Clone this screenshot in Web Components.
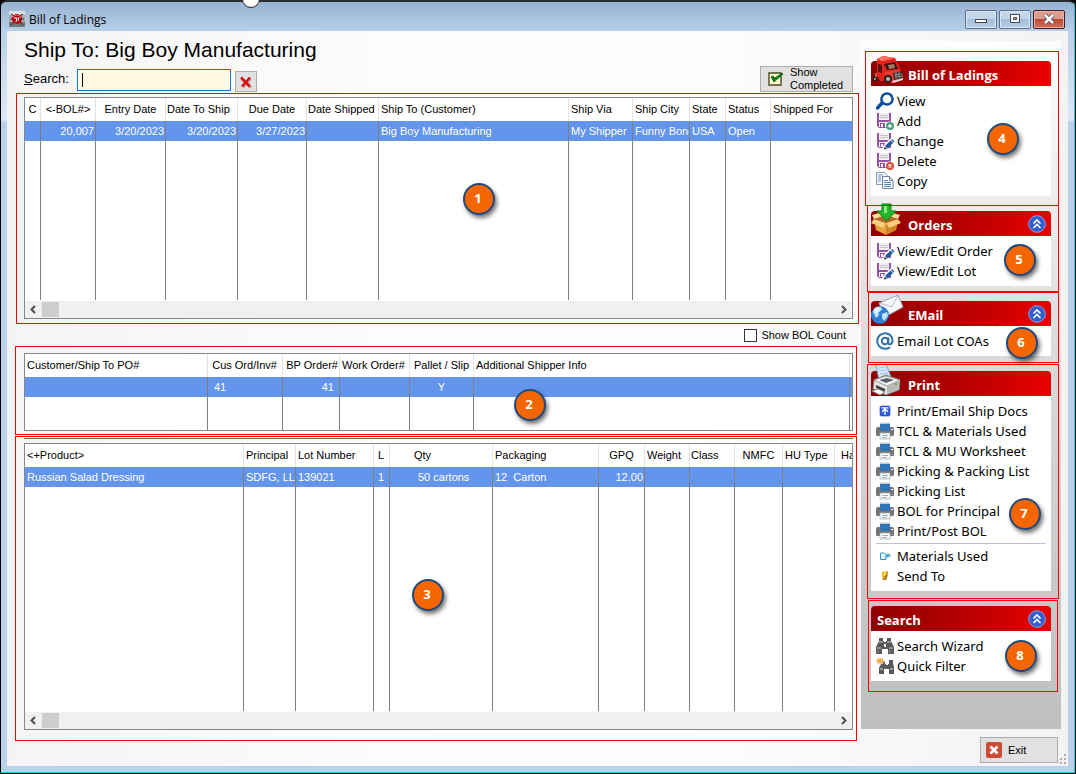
<!DOCTYPE html>
<html lang="en">
<head>
<meta charset="utf-8">
<title>Bill of Ladings</title>
<style>
  body { margin: 0; background: #000; font-family: "Liberation Sans", Arial, sans-serif; font-size: 11px; color: #000; }
</style>
</head>
<body>
<bol-app></bol-app>
<script>
const disk = `<path d="M1 1h14v15H3l-2-2z" fill="#9553a8"/><path d="M3 1h10v7H3z" fill="#f1f1f1"/><path d="M4 3h8v1H4zM4 5h8v1H4z" fill="#c4c4c4"/><path d="M3 10h10v5H3z" fill="#fff"/><path d="M4 11h5v4H4z" fill="#9553a8"/><path d="M5 12h2v3H5z" fill="#fff"/>`;
const printer = `<path d="M4 0h10v4H4z" fill="#e4e8ec"/><path d="M0 7l1-2h16l1 2v6l-1 1H1l-1-1z" fill="#757577"/><path d="M4 2h10v6l-1 1H5L4 8z" fill="#2f74b5"/><path d="M4 1h10v1H4z" fill="#c2cbd4"/><path d="M15 7h2v1h-2z" fill="#fff"/><path d="M4 11h10v6H4z" fill="#fff" stroke="#a5acb4" stroke-width=".8"/><path d="M6 13h6v1H6zM6 15h5v1H6z" fill="#8fb4d8"/>`;
const bino = `<path d="M3 1h4v3h1v1h2V4h1V1h4v3l3 6v7h-6v-5H6v5H0v-7l3-6z" fill="#59595b"/><path d="M1 11h4M13 11h4M3 5h4M11 5h4" stroke="#d8d8d8" stroke-width=".9"/><path d="M8 7h2v3H8z" fill="#fff"/><path d="M2 13v3M14 13v3" stroke="#999" stroke-width="1"/>`;
const chevrons = `<circle cx="9" cy="9" r="8.300" fill="#2f5fd0" stroke="#8aa6ea"/><path d="M5.500 8.500L9 5l3.500 3.500M5.500 13L9 9.500l3.500 3.500" fill="none" stroke="#fff" stroke-width="1.700"/>`;
const ICONS = {
  app: [16, `<rect width="16" height="16" fill="#aaa"/><path d="M0 0h16v4H0z" fill="#ddd"/><path d="M0 11h16v5H0z" fill="#777"/><path d="M2 3l3 2M14 3l-3 2M1 8h3M15 8h-3M2 14l3-3M14 14l-3-3" stroke="#444" stroke-width="1.200"/><circle cx="8" cy="8" r="5" fill="#b30812"/><path d="M4 6q4-4 8 0" stroke="#f0676c" fill="none"/><path d="M5 7h3l-1 4M10 6l-1 4" stroke="#fff" stroke-width="1" fill="none"/>`],
  view: [18, `<path d="M1.500 16l5-5.500" stroke="#0c4da2" stroke-width="3.400" stroke-linecap="round"/><circle cx="11" cy="7" r="5.600" fill="#fff" stroke="#0c4da2" stroke-width="2.500"/>`],
  add: [18, disk + `<circle cx="14" cy="14" r="4.500" fill="#fff"/><circle cx="14" cy="14" r="4" fill="#43a47c"/><path d="M14 12v4M12 14h4" stroke="#fff" stroke-width="1.300"/>`],
  change: [18, disk + `<path d="M6.500 17.500l1-4 7-7 3.500 3-7 7z" fill="#fff"/><path d="M9 14l5.500-5.500 2.500 2.500-5.500 5.500z" fill="#215c99"/><path d="M15 8l1-1 2.500 2.500-1 1z" fill="#215c99"/><path d="M8 17.500l.6-3 2.400 2.400z" fill="#333"/>`],
  del: [18, disk + `<circle cx="14" cy="14" r="4.500" fill="#fff"/><circle cx="14" cy="14" r="4" fill="#d2503a"/><path d="M12.500 12.500l3 3M15.500 12.500l-3 3" stroke="#fff" stroke-width="1.200"/>`],
  copy: [18, `<path d="M.500 .500h8l3 3v9h-11z" fill="#f2f5f8" stroke="#8c9aaa"/><path d="M2 3h5M2 5h3M2 7h3M2 9h3" stroke="#6b9bc9"/><path d="M6.500 4.500h7l3.500 3.500v8.500H6.500z" fill="#fff" stroke="#6e8196"/><path d="M13.500 4.500v4H17" fill="#ccd8e4" stroke="#6e8196"/><path d="M8 8.500h4M8 10.500h7M8 12.500h7M8 14.500h7" stroke="#4785bd"/>`],
  at: [18, `<circle cx="9" cy="9" r="3.200" fill="none" stroke="#2f73ad" stroke-width="2"/><path d="M12.300 5.500v5.500c0 2.300 4.200 1.800 4.200-2.500C16.500 4.200 13.200 1.200 9 1.200S1.200 4.800 1.200 9s3.300 7.800 7.800 7.800c2 0 3.600-.5 5-1.400" fill="none" stroke="#2f73ad" stroke-width="2"/>`],
  printer: [18, printer],
  up: [18, `<rect x="4" y="4" width="10" height="10" rx="1.500" fill="#2d5be3" stroke="#1c3dab" stroke-width=".6"/><path d="M5.500 5.800h7M6 9.800L9 7l3 2.800M9 7.500V13" fill="none" stroke="#fff" stroke-width="1.300"/>`],
  mats: [18, `<path d="M4.500 6h4l1.500 2v4.500H4.500z" fill="#e8f7fd" stroke="#2a9ccc"/><path d="M9 7l2 2-2 2M12 6v5M10.500 8.500h4M11 7l3 3M14 7l-3 3" fill="none" stroke="#3c9dc6" stroke-width=".9"/>`],
  send: [18, `<path d="M6 5l6-1-1 4h1l-2 5-4 0 1-3H6z" fill="#f4b51b"/><path d="M6 13h4l2-6v-3l-3 5H7l2 1z" fill="#6d5222" opacity=".55"/><path d="M7 6l4-1-2 4H7z" fill="#ffd34a"/>`],
  bino: [18, bino],
  quick: [18, `<g transform="translate(3 0)"><path d="M3 4h3v3h1V8h2V7h1V3h4v3l1 5v6h-5v-5H5v5H0v-6l2-4z" fill="#59595b"/><path d="M1 12h3M11 12h3" stroke="#ddd"/></g><path d="M4 0l1 2 2-1 0 2 2 1-2 1 0 2-2-1-1 2-1-2-2 1V5L0 4l1-1V1l2 1z" fill="#efaa55" stroke="#fff" stroke-width=".4"/>`],
  exit: [16, `<rect width="16" height="16" rx="2" fill="#cf4a32"/><path d="M4.500 4.500l7 7M11.500 4.500l-7 7" stroke="#fff" stroke-width="2.800"/>`],
  clear: [14, `<path d="M3 4l9 9M12 4l-8 9" stroke="#888" stroke-width="2.500" opacity=".5"/><path d="M2 2.500l9 9M11 2.500l-8 9" stroke="#dc1010" stroke-width="2.600"/>`],
  check: [16, `<path d="M1 2h12v12H1z" fill="#fdfdd0" stroke="#4a4a20" stroke-width="1.400"/><path d="M3 6l3 5 9-8-1-1-7 5-2-2z" fill="#0c8415" stroke="#075a0e" stroke-width=".8"/>`],
  chevrons: [18, chevrons],
  truck: [34, `<path d="M2 15h10l2 10H1z" fill="#7d0b0b"/><path d="M6 4l6-3 12 2 4 8 2 5-3 10H9L6 20z" fill="#e0231c"/><path d="M6 4l6-3 12 2-11 3z" fill="#ff6a5a"/><path d="M13 9l11-2 3 7-11 1z" fill="#3a1414"/><path d="M17 10l6-1 1 4-6 1z" fill="#a87a5a"/><path d="M7 9l4 1v8l-4-1z" fill="#5a1010"/><path d="M14 17l15-2 3 5v5l-10 3-8-1z" fill="#ee3a2e"/><path d="M22 18l9-2 1 7-9 2z" fill="#39302a"/><path d="M23 20l8-1M24 22l8-1M25 17v7M28 17v6" stroke="#aaa" stroke-width=".7"/><circle cx="4" cy="24" r="2.500" fill="#28211f"/><circle cx="4" cy="24" r="1" fill="#aaa"/><circle cx="17" cy="24" r="4" fill="#28211f"/><circle cx="17" cy="24" r="2" fill="#b9b9b9"/><path d="M21 26l11-3v2l-10 3z" fill="#d8d8d8"/><path d="M5 18v4M10 6l1-3" stroke="#ffb0a0"/>`],
  box: [34, `<path d="M3 14l12 4 12-4-2 11-10 5-10-5z" fill="#e9a53c"/><path d="M15 18v12l10-5 2-11z" fill="#cf8226"/><path d="M3 14L0 18l12 5 3-5zM27 14l3 4-12 5-3-5z" fill="#f8cf7c"/><path d="M3 14l-2-4 10-3 4 4zM27 14l2-4-10-3-4 4z" fill="#fbdc9a"/><path d="M3 14l12-4 12 4-12 4z" fill="#b06f24"/><path d="M11 -1h9v7h5L15.500 16 6 6h5z" fill="#25b52b" stroke="#0d7a18"/><path d="M13 0h3v8h-3z" fill="#8be87a"/>`],
  mail: [34, `<path d="M8 8l19-8 5 12-18 10z" fill="#f6f8fb" stroke="#9ba6b5"/><path d="M8 8l13 4 6-12" fill="none" stroke="#b5becb"/><circle cx="9" cy="20" r="9" fill="#2c7fd4"/><path d="M2 17c1-5 6-6 8-5l1 3-4 2 1 3-3 3zM11 19l5-2 1 4-4 5-2-3z" fill="#bfe3f7"/><circle cx="6" cy="15" r="3" fill="#fff" opacity=".55"/>`],
  bigprint: [34, `<path d="M5 0l10-1 5 13-12 3z" fill="#d7e8fb" stroke="#7ba3d4"/><path d="M7 3l8-1M8 6l8-1M9 9l8-1" stroke="#9fc2ea"/><path d="M3 15l12-5 14 5-1 10-13 5L2 24z" fill="#e4e4e2" stroke="#77777a"/><path d="M3 15l12-4 14 4-13 6z" fill="#f9f9f8" stroke="#999"/><path d="M8 15l8-2 7 2-8 3z" fill="#59626c"/><path d="M16 21v8l12-5 1-9z" fill="#b9b9b8"/><path d="M5 20l9 4v3l-9-4z" fill="#3c3c3e"/><path d="M1 26l6-2 7 3-5 3z" fill="#fff" stroke="#888"/><circle cx="25" cy="19" r="1" fill="#48ad3c"/>`]
};

function define(name, css, html) {
  const tpl = document.createElement("template");
  customElements.define(name, class extends HTMLElement {
    connectedCallback() {
      if (this.shadowRoot) return;
      tpl.innerHTML = `<style>*{box-sizing:border-box}${css}</style>` + (typeof html === "function" ? html(this) : html);
      this.attachShadow({ mode: "open" }).append(tpl.content.cloneNode(true));
    }
  });
}

define("app-icon", `:host{display:block;flex:none} svg{display:block;overflow:visible}`, el => {
  const [s, body] = ICONS[el.getAttribute("name")];
  return `<svg width="${s}" height="${s}" viewBox="0 0 ${s} ${s}" aria-hidden="true">${body}</svg>`;
});

/* Numbered call-out that floats over a panel */
define("note-badge", `:host{position:absolute;left:var(--x);top:var(--y);width:32px;height:32px;border-radius:50%;
  background:#f56600;border:2px solid #21497d;box-shadow:2px 3px 4px rgba(0,0,0,.55);padding:0 2px 2px 0;
  display:flex;align-items:center;justify-content:center;color:#fff;font:bold 13px/16px "Open Sans",sans-serif;box-sizing:border-box;z-index:2}`, `<slot></slot>`);

define("title-bar", `:host{display:flex;height:31px;align-items:center;padding:7px 3px 0 2px;gap:4px;box-sizing:border-box;
  font:12px/16px "Open Sans",sans-serif}
  h1{font:inherit;margin:0;flex:1;padding-top:2px} .b{display:flex;gap:2px}
  button{width:32px;height:19px;padding:0;border:1px solid #5b6f89;border-radius:2px;box-shadow:inset 0 0 0 1px #dce8f5;
    background:linear-gradient(#c3d5e9 45%,#a5bdd8 50%,#b9d0e8);display:grid;place-items:center}
  .x{border-color:#4a1720;background:linear-gradient(#dd9b8d 45%,#bd4a32 50%,#d0705a);box-shadow:inset 0 0 0 1px #e9b5aa}`,
  `<app-icon name="app"></app-icon><h1>Bill of Ladings</h1><div class="b">
   <button aria-label="Minimize"><svg width="12" height="12"><rect x=".5" y="6.500" width="11" height="3" fill="#fff" stroke="#445"/></svg></button>
   <button aria-label="Maximize"><svg width="12" height="12"><path d="M1.500 1.500h9v8h-9z" fill="#fff" stroke="#445"/><path d="M4.500 4.500h3v2h-3z" fill="#9bb4d0" stroke="#445"/></svg></button>
   <button class="x" aria-label="Close"><svg width="12" height="12"><path d="M2 2l8 8M10 2l-8 8" stroke="#445" stroke-width="4"/><path d="M2 2l8 8M10 2l-8 8" stroke="#fff" stroke-width="2.500"/></svg></button></div>`);

/* Grid: columns come from the GRIDS table, cells are [title, value, width, title style, value style] */
const GRIDS = {
  ladings: [["C","",16,"c"],["&lt;-BOL#&gt;","20,007",55,"c","r"],["Entry Date","3/20/2023",70,"c","r"],["Date To Ship","3/20/2023",72,"t","r"],
    ["Due Date","3/27/2023",69,"c","r"],["Date Shipped","",72,"t"],["Ship To (Customer)","Big Boy Manufacturing",0],["Ship Via","My Shipper",64],
    ["Ship City","Funny Bone",57],["State","USA",36],["Status","Open",45],["Shipped For","",81]],
  orders: [["Customer/Ship To PO#","",183],["Cus Ord/Inv#","41",75,"r w","i"],["BP Order#","41",57,"r","r w"],["Work Order#","",70],
    ["Pallet / Slip","Y",64,"c","c"],["Additional Shipper Info","",0],["","",2,"t","t"]],
  products: [["&lt;+Product&gt;","Russian Salad Dressing",219],["Principal","SDFG, LLC",52],["Lot Number","139021",78],["L","1",16,"l","l"],
    ["Qty","50 cartons",103,"q","q2"],["Packaging","12&nbsp; Carton",106],["GPQ","12.00",46,"c","r"],["Weight","",45],
    ["Class","",45,"t"],["NMFC","",48,"c"],["HU Type","",52],["Handling","",0,"i"]]
};
define("data-grid", `:host{display:flex;flex-direction:column;border:1px solid #828790;background:#fff;box-sizing:border-box;min-height:78px}
  .v{flex:1;display:grid;overflow:hidden}
  table{border-collapse:separate;border-spacing:0;table-layout:fixed;width:100%;height:100%}
  th,td{padding:0 2px;font-weight:normal;text-align:left;white-space:nowrap;overflow:hidden;border-right:1px solid #808080}
  th{border-color:#e4e4e4;padding-bottom:2px} tr>:last-child{border-right:0}
  thead tr{height:23px} .row{height:20px} .row td{background:#6495ed;color:#fff}
  .c{text-align:center;padding-left:0;padding-right:0} .r{text-align:right;padding-right:1px} .t{padding-left:1px;padding-right:0}
  .i{padding-left:6px} .l{padding-left:4px} .w{padding-right:5px} .q{padding-left:24px} .q2{padding-left:28px}
  .bar{height:17px;flex:none;background:#f0f0f0;display:flex;align-items:center;padding:0 4px;margin-top:1px}
  .bar i{width:17px;height:15px;background:#cdcdcd;margin:0 auto 0 5px}
  :host(:not([bar])) .bar{display:none}`, el => {
  const g = GRIDS[el.getAttribute("rows")];
  const arrow = d => `<svg width="8" height="9"><path d="${d}" fill="none" stroke="#505050" stroke-width="2"/></svg>`;
  return `<div class="v"><table><colgroup>${g.map(c => `<col${c[2] ? ` style="width:${c[2]}px"` : ""}>`).join("")}</colgroup>
  <thead><tr>${g.map(c => `<th class="${c[3] || ""}">${c[0]}</th>`).join("")}</tr></thead>
  <tbody><tr class="row">${g.map(c => `<td class="${c[4] || ""}">${c[1]}</td>`).join("")}</tr><tr>${g.map(() => `<td></td>`).join("")}</tr></tbody></table></div>
  <div class="bar">${arrow("M6 1L2.500 4.500L6 8")}<i></i>${arrow("M2 1L5.500 4.500L2 8")}</div>`;
});

define("search-bar", `:host{display:flex;height:27px;align-items:flex-end;padding:0 6px 1px 9px;box-sizing:border-box}
  label{font-size:13px;line-height:26px;width:53px}
  input{width:154px;height:22px;border:1px solid #0078d7;margin:0 4px 1px 0;padding:0 4px;font:13px "Liberation Sans",sans-serif;
    background:linear-gradient(#000,#000) 4px 3px/1px 14px no-repeat,#fffbe2}
  button{border:1px solid #adadad;background:#e1e1e1;padding:0}
  .k{width:22px;height:21px;display:grid;place-items:center}
  .s{margin-left:auto;width:93px;height:26px;display:flex;align-items:center;gap:6px;padding-left:7px;text-align:left;font:11px/13px "Liberation Sans",sans-serif}`,
  `<label for="q"><u>S</u>earch:</label><input id="q" type="text"><button class="k" aria-label="Clear search"><app-icon name="clear"></app-icon></button>
   <button class="s"><app-icon name="check"></app-icon><span>Show<br>Completed</span></button>`);

define("side-section", `:host{display:block;position:relative}
  header{height:25px;background:linear-gradient(90deg,#900000,#b00000 45%,#ea0000);border-radius:4px 4px 0 0;display:flex;align-items:center;padding:0 5px 0 37px}
  :host([plain]) header{padding-left:6px}
  h2{margin:0;padding-top:3px;flex:1;color:#fff;font:bold 13px/18px "Open Sans",sans-serif}
  header button{border:0;background:none;padding:0}
  .big{position:absolute;left:0;top:-6px}
  nav{background:#fff;padding:5px}
  .mark{position:absolute;inset:var(--mark);border:1px solid #f00;pointer-events:none}`,
  el => `<header>${el.hasAttribute("icon") ? `<app-icon class="big" name="${el.getAttribute("icon")}"></app-icon>` : ""}<h2>${el.getAttribute("title-text")}</h2>
   ${el.hasAttribute("fold") ? `<button aria-label="Collapse"><app-icon name="chevrons"></app-icon></button>` : ""}</header>
   <nav><slot></slot></nav><div class="mark"></div><slot name="note"></slot>`);

define("side-item", `:host{display:block} a{display:flex;align-items:center;gap:3px;height:20px;color:#000;text-decoration:none;white-space:nowrap;font:13px/20px "Noto Sans","Open Sans",sans-serif}`,
  el => `<a href="#"><app-icon name="${el.getAttribute("icon")}"></app-icon><span><slot></slot></span></a>`);

define("bol-app", `:host{display:block;padding:0 1px 1px 1px;background:#000}
  .win{position:relative;min-height:calc(100vh - 1px);display:flex;flex-direction:column;padding:0 6px 6px;border-top:2px solid #2a2c33;
    border-right:1px solid #2fc4e6;border-bottom:1px solid #2fc4e6;border-radius:6px 6px 0 0;
    background:linear-gradient(#98b3d1,#b9d1ea 31px,#dce8f5 118px,#b9d1ea 120px)}
  title-bar{margin-top:-2px}
  .knob{position:absolute;left:241px;top:-10px;width:18px;height:18px;border-radius:50%;background:#fff;border:1px solid #222}
  .clip{position:absolute;inset:-2px 0 auto 0;height:12px;overflow:hidden;pointer-events:none}
  main{flex:1;position:relative;display:grid;grid-template-columns:minmax(0,1fr) 200px;column-gap:2px;padding:7px 7px 3px 8px;
    background:linear-gradient(90deg,#f4f4f4,#fdfdfd 40%,#fdfdfd 65%,#f3f3f3)}
  .left{display:flex;flex-direction:column;padding-bottom:22px}
  .left h2{margin:0 0 4px 9px;font:21px/24px "Liberation Sans",sans-serif}
  .f{position:relative;display:flex;flex-direction:column;border:1px solid #f00}
  .f data-grid{flex:1}
  .f1{height:231px;padding:3px 5px 4px 7px;margin-left:1px}
  .f2{height:89px;padding:6px 3px 3px 8px;margin:0 2px 1px 0}
  .f3{flex:1;min-height:200px;padding:1px 3px 10px 8px;margin-right:2px}
  hr{margin:0 0 4px;border:0;height:1px;background:#696969;flex:none}
  .cnt{display:flex;height:22px;align-items:center;justify-content:flex-end;gap:4px;padding-right:13px}
  .cnt input{appearance:none;width:13px;height:13px;margin:0;border:1px solid #333;background:#fff}
  .right{display:flex;flex-direction:column;padding-top:3px}
  aside{flex:1;display:flex;flex-direction:column;gap:15px;padding:20px 10px;background:linear-gradient(#fdfdfd,#ededed 23%,#dadada 46%,#c8c8c8 80%,#bfbfbf)}
  .sep{height:1px;margin:2px 0;background:#b9c0e0}
  .exit{align-self:flex-end;width:78px;height:26px;margin:8px 3px 0 0;display:flex;align-items:center;gap:6px;padding:0 5px;border:1px solid #adadad;background:#e1e1e1;font:11px/16px "Liberation Sans",sans-serif}
  .grip{position:absolute;right:1px;bottom:1px}`,
`<div class="win"><title-bar></title-bar><div class="clip"><div class="knob"></div></div>
<main>
 <div class="left">
  <h2>Ship To: Big Boy Manufacturing</h2>
  <search-bar></search-bar>
  <section class="f f1"><data-grid rows="ladings" bar></data-grid><note-badge style="--x:446px;--y:89px">1</note-badge></section>
  <div class="cnt"><input type="checkbox" id="cnt"><label for="cnt">Show BOL Count</label></div>
  <section class="f f2"><data-grid rows="orders"></data-grid><note-badge style="--x:498px;--y:42px">2</note-badge></section>
  <section class="f f3"><hr><data-grid rows="products" bar></data-grid><note-badge style="--x:396px;--y:142px">3</note-badge></section>
 </div>
 <div class="right">
  <aside>
   <side-section title-text="Bill of Ladings" icon="truck" style="--mark:-10px -8px -10px -6px">
    <side-item icon="view">View</side-item><side-item icon="add">Add</side-item><side-item icon="change">Change</side-item><side-item icon="del">Delete</side-item><side-item icon="copy">Copy</side-item>
    <note-badge slot="note" style="--x:116px;--y:62px">4</note-badge></side-section>
   <side-section title-text="Orders" icon="box" fold style="--mark:-6px -8px -6px -4px">
    <side-item icon="change">View/Edit Order</side-item><side-item icon="change">View/Edit Lot</side-item>
    <note-badge slot="note" style="--x:133px;--y:33px">5</note-badge></side-section>
   <side-section title-text="EMail" icon="mail" fold style="--mark:-9px -8px -7px -3px">
    <side-item icon="at">Email Lot COAs</side-item>
    <note-badge slot="note" style="--x:135px;--y:26px">6</note-badge></side-section>
   <side-section title-text="Print" icon="bigprint" style="--mark:-7px -8px -8px -4px">
    <side-item icon="up">Print/Email Ship Docs</side-item><side-item icon="printer">TCL &amp; Materials Used</side-item><side-item icon="printer">TCL &amp; MU Worksheet</side-item><side-item icon="printer">Picking &amp; Packing List</side-item><side-item icon="printer">Picking List</side-item><side-item icon="printer">BOL for Principal</side-item><side-item icon="printer">Print/Post BOL</side-item>
    <div class="sep"></div>
    <side-item icon="mats">Materials Used</side-item><side-item icon="send">Send To</side-item>
    <note-badge slot="note" style="--x:138px;--y:127px">7</note-badge></side-section>
   <side-section title-text="Search" plain fold style="--mark:-6px -7px -11px -3px">
    <side-item icon="bino">Search Wizard</side-item><side-item icon="quick">Quick Filter</side-item>
    <note-badge slot="note" style="--x:134px;--y:34px">8</note-badge></side-section>
  </aside>
  <button class="exit"><app-icon name="exit"></app-icon>Exit</button>
 </div>
 <svg class="grip" width="8" height="11" aria-hidden="true"><path d="M5 0h2v2H5zM1 4h2v2H1zM5 4h2v2H5zM1 8h2v2H1zM5 8h2v2H5z" fill="#aaa"/></svg>
</main></div>`);
</script>
</body>
</html>
